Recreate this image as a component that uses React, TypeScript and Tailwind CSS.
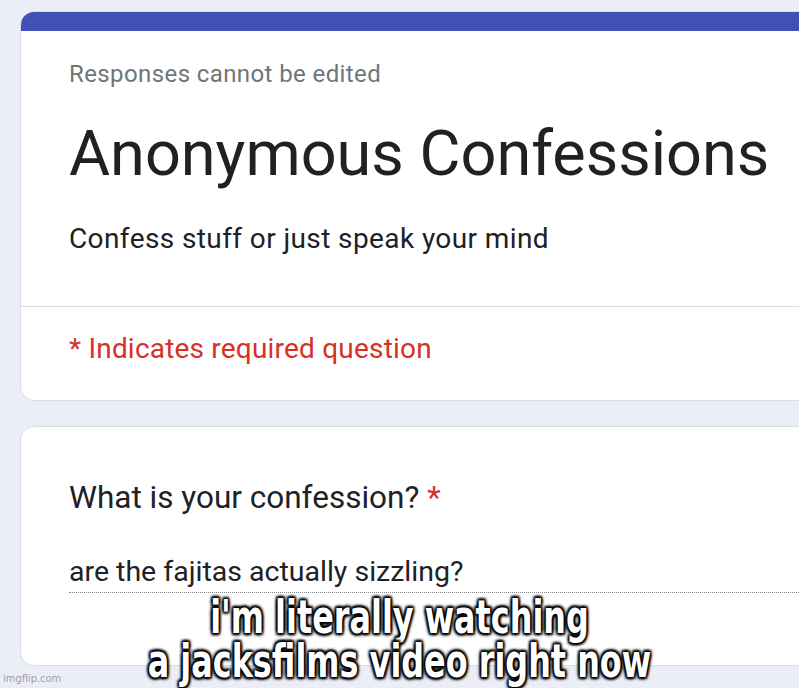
export default function App() {
  return (
    <div className="relative h-[688px] w-[799px] overflow-hidden bg-[#ebeef7] pl-[20px] pt-[11px] font-['Roboto',sans-serif]">
      {/* Header card */}
      <div className="w-[840px] overflow-hidden rounded-[14px] border border-[#dadce0] bg-white">
        <div className="h-[19px] bg-[#4051b5]" />
        <div className="pl-[48px] pt-[29px] pb-[51px]">
          <p className="text-[24px] leading-[28px] tracking-[0.4px] text-[#70757a]">Responses cannot be edited</p>
          <h1 className="mt-[26px] text-[63px] leading-[80px] text-[#202124]">Anonymous Confessions</h1>
          <p className="mt-[29px] text-[28px] leading-[32px] tracking-[0.4px] text-[#202124]">Confess stuff or just speak your mind</p>
        </div>
        <div className="h-px bg-[#dadce0]" />
        <div className="pl-[48px] pt-[26px] pb-[35px]">
          <p className="text-[28px] leading-[32px] tracking-[0.2px] text-[#d93025]">* Indicates required question</p>
        </div>
      </div>

      {/* Question card */}
      <div className="mt-[25px] h-[240px] w-[840px] rounded-[14px] border border-[#dadce0] bg-white pl-[48px] pt-[55px]">
        <p className="text-[31.5px] leading-[32px] text-[#202124]">
          What is your confession? <span className="text-[#d93025]">*</span>
        </p>
        <p className="mt-[42px] text-[28.5px] leading-[32px] text-[#202124]">are the fajitas actually sizzling?</p>
        <div className="mt-[4px] border-b border-dotted border-[#80868b]" />
      </div>

      {/* Meme caption */}
      <div className="absolute left-0 right-0 top-[595px] scale-x-[0.77] text-center font-['DejaVu_Sans_Condensed',sans-serif] text-[46px] font-bold leading-[44px] text-white [text-shadow:0_0_3px_#000,0_0_3px_#000,2px_2px_3px_#000,-2px_-2px_3px_#000,2px_-2px_3px_#000,-2px_2px_3px_#000]">
        <p>i'm literally watching</p>
        <p>a jacksfilms video right now</p>
      </div>

      <span className="absolute left-[3px] top-[671px] font-['Liberation_Sans_Narrow','DejaVu_Sans_Condensed',sans-serif] text-[11px] leading-[16px] text-[#a0a0a8]">
        imgflip.com
      </span>
    </div>
  );
}
